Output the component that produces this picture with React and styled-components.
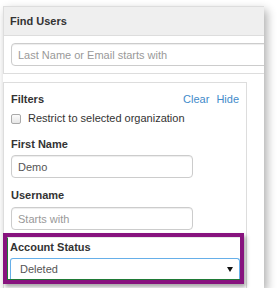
import React from 'react'
import styled, { createGlobalStyle } from 'styled-components'

const GlobalStyle = createGlobalStyle`
  html, body {
    margin: 0;
    padding: 0;
    background: #fff;
  }
  body {
    font-family: "Liberation Sans", Arial, sans-serif;
    font-size: 11px;
    color: #333;
  }
`

const Shot = styled.div`
  margin: 6px 0 0 3px;
  width: 261px;
  height: 282px;
  overflow: hidden;
  background: #fff;
  box-shadow: 3px 4px 9px rgba(0, 0, 0, 0.32);
`

const Panel = styled.div`
  width: 300px;
  border: 1px solid #ddd;
  background: #fff;
`

const PanelHeading = styled.div`
  height: 28px;
  line-height: 28px;
  padding-left: 6px;
  background: #efefef;
  border-bottom: 1px solid #ddd;
  font-weight: bold;
`

const PanelBody = styled.div`
  padding: 7px;
`

const TextInput = styled.input`
  display: block;
  box-sizing: border-box;
  width: ${p => p.$width || '100%'};
  height: 23px;
  margin: 0;
  padding: 0 6px;
  border: 1px solid #ccc;
  border-radius: 4px;
  box-shadow: inset 0 1px 1px rgba(0, 0, 0, 0.075);
  font-family: inherit;
  font-size: 11px;
  color: #555;
  outline: none;

  &::placeholder {
    color: #999;
  }
`

const FilterPanel = styled.div`
  margin-top: 8px;
  width: 244px;
  box-sizing: border-box;
  border: 1px solid #ddd;
  padding: 9px 7px 7px 7px;
`

const TitleRow = styled.div`
  display: flex;
  justify-content: space-between;
  line-height: 15px;
`

const Title = styled.span`
  font-weight: bold;
`

const Links = styled.div`
  display: flex;
  gap: 7px;
`

const LinkText = styled.a`
  color: #428bca;
  text-decoration: none;
  cursor: pointer;
`

const CheckRow = styled.label`
  display: flex;
  align-items: center;
  gap: 7px;
  margin-top: 4px;
  line-height: 15px;
`

const Box = styled.span`
  width: 8px;
  height: 8px;
  border: 1px solid #a9a9a9;
  border-radius: 2px;
  background: linear-gradient(#fbfbfb, #e6e6e6);
`

const Label = styled.div`
  margin-top: ${p => p.$top || 0}px;
  margin-bottom: ${p => p.$bottom || 3}px;
  line-height: 15px;
  font-weight: bold;
`

const Highlight = styled.div`
  margin: 3px -5px 0 -8px;
  border: 4px solid #87137e;
  box-shadow: 2px 3px 4px rgba(0, 0, 0, 0.35);
`

const HighlightInner = styled.div`
  border: 1px solid #1f7a36;
  border-top-color: #e8e8e8;
  border-right: none;
  padding: 2px 0 0 2px;
`

const Select = styled.div`
  display: flex;
  align-items: center;
  justify-content: space-between;
  height: 21px;
  box-sizing: border-box;
  border: 1px solid #66afe9;
  border-bottom: none;
  border-radius: 3px 3px 0 0;
  padding: 0 6px 0 9px;
  color: #555;
  font-size: 11px;
`

const Caret = styled.span`
  width: 0;
  height: 0;
  border-left: 3px solid transparent;
  border-right: 3px solid transparent;
  border-top: 5px solid #111;
  margin-top: 1px;
`

export default function App() {
  return (
    <>
      <GlobalStyle />
      <Shot>
        <Panel>
          <PanelHeading>Find Users</PanelHeading>
          <PanelBody>
            <TextInput placeholder="Last Name or Email starts with" $width="300px" />
          </PanelBody>
        </Panel>
        <FilterPanel>
          <TitleRow>
            <Title>Filters</Title>
            <Links>
              <LinkText>Clear</LinkText>
              <LinkText>Hide</LinkText>
            </Links>
          </TitleRow>
          <CheckRow>
            <Box />
            Restrict to selected organization
          </CheckRow>
          <Label $top={11}>First Name</Label>
          <TextInput defaultValue="Demo" $width="182px" />
          <Label $top={10} $bottom={4}>Username</Label>
          <TextInput placeholder="Starts with" $width="182px" />
          <Highlight>
            <HighlightInner>
              <Label $bottom={3}>Account Status</Label>
              <Select>
                Deleted
                <Caret />
              </Select>
            </HighlightInner>
          </Highlight>
        </FilterPanel>
      </Shot>
    </>
  )
}
